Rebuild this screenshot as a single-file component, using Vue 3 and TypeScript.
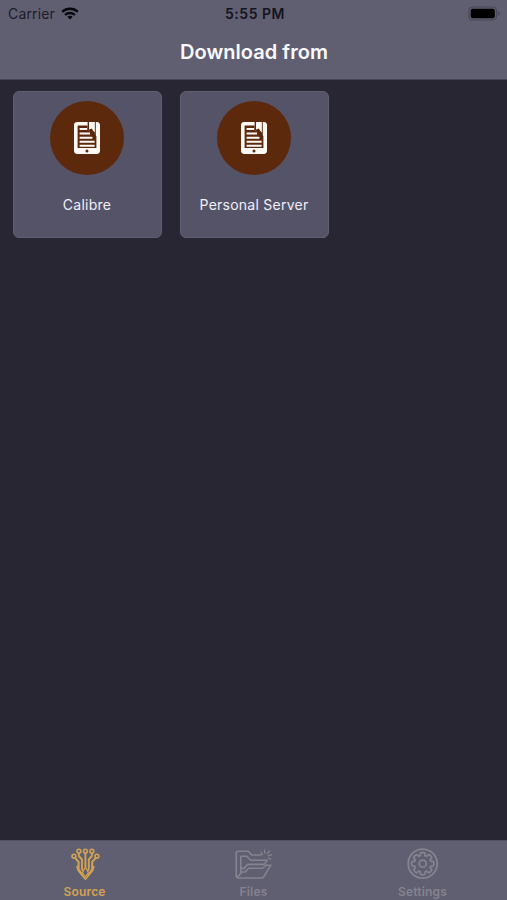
<script setup lang="ts">
interface Source { id: string; name: string }

const sources: Source[] = [
  { id: 'calibre', name: 'Calibre' },
  { id: 'personal', name: 'Personal Server' },
]

const teeth = 8
const gearPath = (() => {
  const pts: string[] = []
  for (let i = 0; i < teeth; i++) {
    const base = (i * 360) / teeth
    for (const [a, r] of [[-17, 8.4], [-12, 10.8], [0, 11.3], [12, 10.8], [17, 8.4]]) {
      const t = ((base + a) * Math.PI) / 180
      pts.push(`${(16 + r * Math.sin(t)).toFixed(2)} ${(16 - r * Math.cos(t)).toFixed(2)}`)
    }
  }
  return `M${pts.join('L')}Z`
})()
</script>

<template>
  <div class="screen">
    <header class="top">
      <div class="status">
        <div class="carrier">
          <span class="carrier-name">Carrier</span>
          <svg class="wifi" width="18" height="13" viewBox="0 0 18 13">
            <g fill="none" stroke="#08080f" stroke-width="2.3">
              <path d="M1.1 4.9C5.5.7 12.5.7 16.9 4.9" />
              <path d="M4 8C6.8 5.3 11.2 5.3 14 8" />
            </g>
            <path d="M6.3 9.7Q9 7.7 11.7 9.7L9 12.4Z" fill="#08080f" />
          </svg>
        </div>
        <span class="time">5:55 PM</span>
        <svg class="battery" width="34" height="15" viewBox="0 0 34 15">
          <rect x="1" y="1" width="27.5" height="13" rx="3.6" fill="none" stroke="#474654" stroke-width="1.1" />
          <rect x="2.7" y="2.8" width="24.1" height="9.4" rx="2" fill="#000" />
          <path d="M30 5.2Q31.7 5.8 31.7 7.5T30 9.8Z" fill="#474654" />
        </svg>
      </div>
      <h1 class="title">Download from</h1>
    </header>

    <main class="grid">
      <button v-for="s in sources" :key="s.id" class="card">
        <span class="disc">
          <svg width="28" height="34" viewBox="0 0 28 34">
            <rect x="1" y="1" width="26" height="32" rx="3.4" fill="#fffaf5" />
            <path d="M4.6 4.4H14.6V9L23.4 15V27H4.6Z" fill="#5c290d" />
            <path d="M14.6 1H16.2V8.6L18.8 7.2L21.6 11.4V1H22.8V16L14.6 9Z" fill="#5c290d" />
            <path d="M16.2 1H21.6V11.4L18.8 7.2L16.2 8.6Z" fill="#fffaf5" />
            <path d="M6.6 8H14M6.6 12.4H17M6.6 16.7H18.2L19.4 17.2M6.6 20.8H21.6M6.6 24.7H21.6" stroke="#fffaf5" stroke-width="2" fill="none" />
            <circle cx="14" cy="29.9" r="1.5" fill="#5c290d" />
          </svg>
        </span>
        <span class="card-name">{{ s.name }}</span>
      </button>
    </main>

    <nav class="tabs">
      <button class="tab active">
        <svg width="40" height="34" viewBox="0 0 40 34" fill="none" stroke="currentColor" stroke-width="1.6" stroke-linejoin="round">
          <circle cx="8.9" cy="9.2" r="1.9" />
          <circle cx="13.9" cy="4.2" r="1.9" />
          <circle cx="20.4" cy="4.2" r="1.9" />
          <circle cx="26.9" cy="4.2" r="1.9" />
          <circle cx="31.9" cy="9.2" r="1.9" />
          <path d="M10 10.8L13.6 14.8V22.2L17.4 28M30.8 10.8L27.2 14.8V22.2L23.4 28" stroke-width="2" />
          <path d="M13.9 6.1V9L17 12.5V22L18.2 24M20.4 6.1V20M26.9 6.1V9L23.8 12.5V22L22.6 24" stroke-width="1.9" />
          <path d="M11.8 19L13.2 23.6L20.4 32.2L27.6 23.6L29 19" />
          <path d="M20.4 20L17.4 25.8L20.4 29.8L23.4 25.8Z" fill="#605f71" stroke-width="1.2" />
        </svg>
        <span class="label source-label">Source</span>
      </button>
      <button class="tab">
        <svg width="40" height="34" viewBox="0 0 40 34" fill="none" stroke="currentColor" stroke-width="1.6" stroke-linejoin="round" stroke-linecap="round">
          <path d="M27 8H17.6L14.4 4.2H4Q2.2 4.2 2.2 6V29Q2.2 31 4.2 31H27.5Q29.3 31 30.2 29.2L36.8 18.2H31.8L28.6 21.3H14.6L11.2 25H8L3 30.4" />
          <path d="M6.8 25V9.2H12.8L16.6 13.2H33.2L30.2 17.4H13.6L10 21.4H7" />
          <path d="M28.4 7.6L27.2 5.2M31 6L30.4 3M33.4 6.4L35.6 4M34.4 8.6L37.8 7.6M34.3 11L37 12.1" stroke-width="1.3" />
        </svg>
        <span class="label files-label">Files</span>
      </button>
      <button class="tab">
        <svg class="gear" width="32" height="32" viewBox="0 0 32 32" fill="none" stroke="currentColor" stroke-width="1.8" stroke-linejoin="round">
          <circle cx="15.7" cy="15.7" r="14.5" />
          <path :d="gearPath" transform="translate(-0.3 -0.3)" />
          <circle cx="15.7" cy="15.7" r="3.5" />
        </svg>
        <span class="label settings-label">Settings</span>
      </button>
    </nav>
  </div>
</template>

<style>
body { background: #282632; }
</style>

<style scoped>
.screen {
  display: flex;
  flex-direction: column;
  width: 507px;
  height: 900px;
  overflow: hidden;
  background: #282632;
  font-family: Inter, "Liberation Sans", sans-serif;
}
button {
  margin: 0;
  border: 0;
  background: none;
  font: inherit;
}
svg { display: block; flex: none; }
.top {
  flex: none;
  box-sizing: border-box;
  height: 80px;
  background: #605f71;
  border-bottom: 1px solid #454352;
}
.status {
  display: grid;
  grid-template-columns: 1fr auto 1fr;
  align-items: center;
  height: 27px;
  padding: 0 5px 0 8px;
}
.carrier {
  display: flex;
  align-items: center;
  gap: 6px;
}
.carrier-name {
  color: #1c1b29;
  font-size: 14px;
  line-height: 27px;
  letter-spacing: 0.15px;
}
.time {
  color: #14131f;
  font-size: 14px;
  font-weight: 600;
  line-height: 27px;
  letter-spacing: 0.5px;
}
.battery { justify-self: end; }
.title {
  margin: 11px 0 0;
  padding-left: 1px;
  color: #faf9ff;
  font-size: 20px;
  font-weight: 600;
  line-height: 29px;
  letter-spacing: 0.05px;
  text-align: center;
}
.grid {
  flex: 1;
  display: grid;
  grid-template-columns: 149px 149px;
  align-content: start;
  gap: 18px;
  padding: 11px 13px;
}
.card {
  display: flex;
  flex-direction: column;
  align-items: center;
  box-sizing: border-box;
  height: 147px;
  padding: 9px 1px 0 0;
  border: 1px solid #605e71;
  border-radius: 6px;
  background: #555368;
}
.disc {
  display: flex;
  align-items: center;
  justify-content: center;
  width: 74px;
  height: 74px;
  border-radius: 50%;
  background: #5c290d;
}
.card-name {
  margin-top: 20px;
  color: #f0eff8;
  font-size: 14px;
  line-height: 20px;
  letter-spacing: 0.25px;
}
.tabs {
  flex: none;
  display: grid;
  grid-template-columns: repeat(3, 1fr);
  box-sizing: border-box;
  height: 60px;
  border-top: 1px solid #555363;
  background: #605f71;
}
.tab {
  display: flex;
  flex-direction: column;
  align-items: center;
  padding: 6px 0 0;
  color: #85838f;
}
.active { color: #d3a354; }
.gear { margin: 1px 0; }
.label {
  margin-top: 3px;
  font-size: 12px;
  font-weight: 600;
  line-height: 16px;
  letter-spacing: 0.2px;
}
</style>
